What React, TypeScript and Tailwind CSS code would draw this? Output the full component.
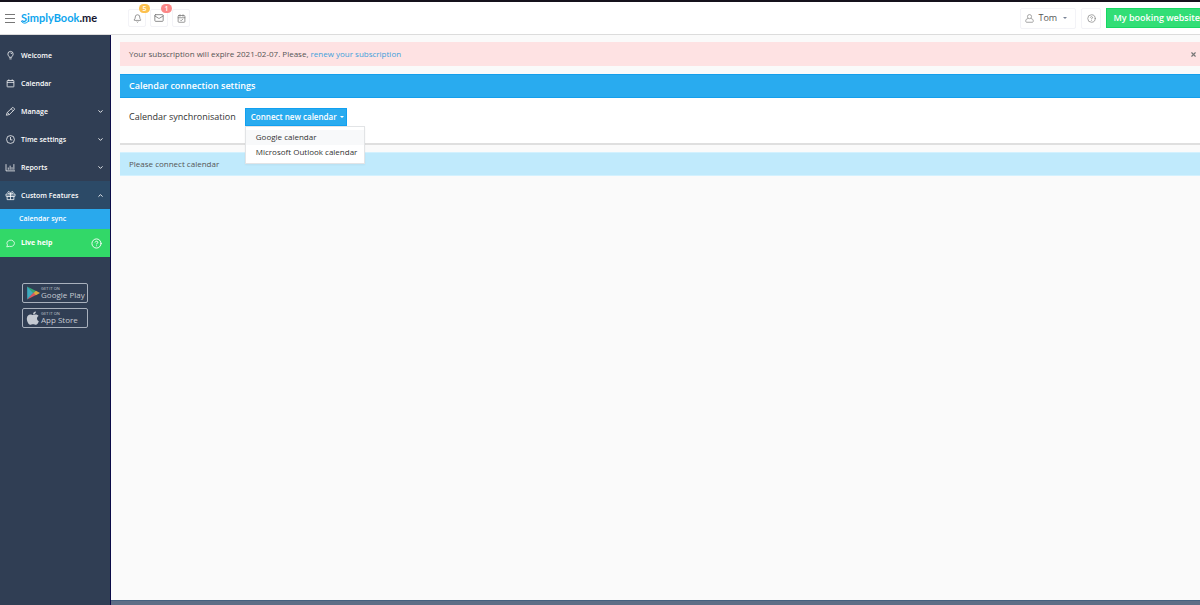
import type { ReactNode } from 'react';
import { Bell, CalendarCheck, ChevronDown, ChevronUp, CircleQuestionMark, Mail, X } from 'lucide-react';

type IconName = 'bulb' | 'calendar' | 'pencil' | 'clock' | 'chart' | 'gift' | 'chat';

const iconShapes: Record<IconName, ReactNode> = {
  bulb: (
    <>
      <path d="M9 17C9 14 5 13 5 8a7 7 0 0 1 14 0c0 5-4 6-4 9Z" />
      <path d="M9 21h6M12 5c2 0 3 1 3 3" />
    </>
  ),
  calendar: (
    <>
      <rect x="3" y="4" width="18" height="17" rx="1" />
      <path d="M3 9h18M7.500 1v4M16.500 1v4" />
    </>
  ),
  pencil: (
    <>
      <path d="M1 22l2-7L16.500 2a2.500 2.500 0 0 1 3.500 0l2 2a2.500 2.500 0 0 1 0 3.500L9 20Z" />
      <path d="M14 5l5 5M4 15l5 5" />
    </>
  ),
  clock: (
    <>
      <circle cx="12" cy="12" r="10.500" />
      <path d="M12 5v8h5" />
    </>
  ),
  chart: (
    <>
      <path d="M0 3v18h24" />
      <path d="M6 18v-6M11 18V7M16 18v-7M21 18V3" />
    </>
  ),
  gift: (
    <>
      <path d="M0 8h24v6H0ZM3 14h18v9H3ZM12 8v15" />
      <path d="M12 8C8 8 4 6 5 3s6-2 7 5c1-7 6-8 7-5s-3 5-7 5Z" />
    </>
  ),
  chat: <path d="M2 21l2-5A10 8.500 0 1 1 9 19.500Z" />,
};

const navItems: { label: string; icon: IconName; expandable?: boolean; open?: boolean }[] = [
  { label: 'Welcome', icon: 'bulb' },
  { label: 'Calendar', icon: 'calendar' },
  { label: 'Manage', icon: 'pencil', expandable: true },
  { label: 'Time settings', icon: 'clock', expandable: true },
  { label: 'Reports', icon: 'chart', expandable: true },
  { label: 'Custom Features', icon: 'gift', expandable: true, open: true },
];

function NavIcon({ name }: { name: IconName }) {
  return (
    <svg
      viewBox="0 0 24 24"
      fill="none"
      stroke="currentColor"
      strokeWidth="2"
      strokeLinejoin="round"
      className="mr-1.5 h-[9px] w-[9px] shrink-0 overflow-visible"
      aria-hidden="true"
    >
      {iconShapes[name]}
    </svg>
  );
}

function Caret({ className }: { className: string }) {
  return (
    <svg viewBox="0 0 4 2" className={`h-[2px] w-1 shrink-0 ${className}`} aria-hidden="true">
      <path d="M0 0h4L2 2Z" fill="currentColor" />
    </svg>
  );
}

function Logo() {
  return (
    <a href="#home" className="relative ml-1.5 flex items-center font-['Lato',sans-serif] text-[11px] leading-4 font-bold text-[#0ea5ee]">
      <svg viewBox="0 0 8 12" fill="none" className="absolute top-0.5 left-0 h-3 w-2" aria-hidden="true">
        <path d="M0 9c2 3 6 3 8-1" stroke="currentColor" strokeWidth="1" />
      </svg>
      SimplyBook<span className="text-[#15152f]">.me</span>
    </a>
  );
}

function HeaderIcon({ label, count, badge, children }: { label: string; count?: number; badge?: string; children: ReactNode }) {
  return (
    <button
      type="button"
      aria-label={label}
      className="relative flex h-[18px] w-[18px] items-center justify-center rounded-xs border border-[#f3f3f7] text-[#777]"
    >
      {children}
      {count && (
        <span
          className={`absolute -top-[6px] left-[10px] flex h-[9px] w-[11px] items-center justify-center rounded-full text-[7px] leading-none font-semibold text-white ${badge}`}
        >
          {count}
        </span>
      )}
    </button>
  );
}

function Header() {
  return (
    <header className="flex h-[35px] items-center overflow-hidden border-t-2 border-b border-t-[#15121c] border-b-[#dcdcdc] bg-white pl-[5px]">
      <button type="button" aria-label="Toggle menu" className="flex w-2.5 flex-col gap-[3px]">
        <span className="h-px bg-[#777]" />
        <span className="h-px bg-[#777]" />
        <span className="h-px bg-[#777]" />
      </button>
      <div className="w-[113px]">
        <Logo />
      </div>
      <div className="flex gap-1">
        <HeaderIcon label="Notifications" count={5} badge="bg-[#fcc04e]">
          <Bell size={9} strokeWidth={2} />
        </HeaderIcon>
        <HeaderIcon label="Messages" count={1} badge="bg-[#fb8787]">
          <Mail size={10} strokeWidth={2} />
        </HeaderIcon>
        <HeaderIcon label="Bookings">
          <CalendarCheck size={9} strokeWidth={2} />
        </HeaderIcon>
      </div>
      <div className="ml-auto flex items-center gap-[5px]">
        <button
          type="button"
          className="flex h-[21px] w-14 items-center rounded-xs border border-[#f3f3f7] pl-1 text-[9px] text-[#555]"
        >
          <svg viewBox="0 0 24 24" fill="none" stroke="#888" strokeWidth="2" className="mr-1 h-[9px] w-[9px]" aria-hidden="true">
            <circle cx="12" cy="7" r="5.500" />
            <path d="M8 12c-4 1-6 3-6 6 0 2 .5 4 2 4h16c1.500 0 2-2 2-4 0-3-2-5-6-6" />
          </svg>
          Tom
          <Caret className="ml-1.5 text-[#7a8497]" />
        </button>
        <button
          type="button"
          aria-label="Help"
          className="flex h-[21px] w-5 items-center justify-center rounded-xs border border-[#f3f3f7] text-[#888]"
        >
          <CircleQuestionMark size={9} strokeWidth={2} />
        </button>
        <a
          href="#website"
          className="flex h-5 items-center border border-r-0 border-[#16d763] bg-[#32de76] pl-1.5 text-[9px] font-semibold whitespace-nowrap text-white"
        >
          My booking website
        </a>
      </div>
    </header>
  );
}

function StoreBadge({ store, children }: { store: string; children: ReactNode }) {
  return (
    <a href="#store" className="flex h-5 w-[66px] items-center gap-px rounded-xs border border-[#a9b1bd] pl-[3px] text-[#c5cad2]">
      <svg viewBox="0 0 24 24" className="h-3.5 w-3.5 shrink-0" aria-hidden="true">
        {children}
      </svg>
      <span className="flex flex-col whitespace-nowrap">
        <span className="text-[4px] leading-[4px]">GET IT ON</span>
        <span className="text-[8px] leading-[8px]">{store}</span>
      </span>
    </a>
  );
}

function Sidebar() {
  return (
    <aside className="w-[111px] shrink-0 border-r border-[#0b0b47] bg-[#303e54] text-white">
      <nav className="pt-1.5 text-[7px] leading-3 font-semibold">
        {navItems.map((item) => (
          <a key={item.label} href="#menu" className={`flex h-7 items-center px-1.5 ${item.open ? 'bg-[#2c4a67]' : ''}`}>
            <NavIcon name={item.icon} />
            <span className="pt-px">{item.label}</span>
            {item.expandable && (item.open ? <ChevronUp size={7} strokeWidth={3} className="ml-auto" /> : <ChevronDown size={7} strokeWidth={3} className="ml-auto" />)}
          </a>
        ))}
        <a href="#sync" className="flex h-5 items-center bg-[#29a9ed] pl-[19px]">
          Calendar sync
        </a>
        <a href="#help" className="flex h-7 items-center bg-[#32d868] pr-2 pl-1.5 font-bold">
          <NavIcon name="chat" />
          Live help
          <CircleQuestionMark size={11} strokeWidth={2} className="ml-auto" />
        </a>
      </nav>
      <div className="mt-[26px] flex flex-col gap-[5px] pl-[22px]">
        <StoreBadge store="Google Play">
          <path d="M2 1v22l11-11Z" fill="#3dabc0" />
          <path d="M2 1l16 8-5 4Z" fill="#35a875" />
          <path d="M2 23l16-8-5-4Z" fill="#d95761" />
          <path d="M17 8l7 4-7 4-4-4Z" fill="#dda83c" />
        </StoreBadge>
        <StoreBadge store="App Store">
          <path
            d="M17 1c0 3-2 5-5 5 0-3 2-5 5-5ZM12 7c1.500 0 3-1.500 5-1 2 0 3.500 1 4.500 2.500-4 2.500-3 7.500.5 9-1 3-3 6-5 6s-2.500-1-5-1-3 1-5 1C4 23 1 17 1.500 12.500 2 8 4.500 6 7.500 6c2 0 3 1 4.500 1Z"
            fill="currentColor"
          />
        </StoreBadge>
      </div>
    </aside>
  );
}

export default function App() {
  return (
    <div className="flex min-h-screen flex-col bg-[#fafafa] font-['Open_Sans',sans-serif] text-[8px] text-[#555]">
      <Header />
      <div className="flex grow">
        <Sidebar />
        <div className="flex min-w-0 grow flex-col">
          <main className="grow pt-[7px] pl-[9px]">
            <div role="alert" className="flex h-6 items-center bg-[#fee2e3] pr-[3px] pl-[9px]">
              <p>
                Your subscription will expire 2021-02-07. Please,{' '}
                <a href="#renew" className="text-[#3d9fdb]">
                  renew your subscription
                </a>
              </p>
              <button type="button" aria-label="Close" className="ml-auto text-[#777]">
                <X size={7} strokeWidth={4} />
              </button>
            </div>

            <section className="mt-2 border-b-2 border-[#dfdfdf] bg-white">
              <h1 className="flex h-6 items-center border-y border-[#159fec] bg-[#29abef] px-[9px] text-[9px] font-semibold text-white">
                Calendar connection settings
              </h1>
              <div className="flex h-[45px] items-start gap-[9px] px-[9px] pt-2.5">
                <span className="text-[9px] leading-[18px] text-[#333]">Calendar synchronisation</span>
                <div className="relative">
                  <button
                    type="button"
                    aria-expanded="true"
                    className="flex h-[18px] w-[102px] items-center border border-[#12a0f0] bg-[#29abef] pl-[5px] text-[8px] font-semibold whitespace-nowrap text-white"
                  >
                    Connect new calendar
                    <Caret className="ml-[3px]" />
                  </button>
                  <div
                    role="menu"
                    className="absolute top-[18px] left-0 w-[120px] border border-[#e2e4e6] bg-white py-[3px] text-[#333] shadow-xs"
                  >
                    <a href="#google" role="menuitem" className="block h-[15px] bg-[#f8f9fa] pl-2.5 leading-[14px]">
                      Google calendar
                    </a>
                    <a href="#outlook" role="menuitem" className="block h-[15px] pl-2.5 leading-[14px]">
                      Microsoft Outlook calendar
                    </a>
                  </div>
                </div>
              </div>
            </section>

            <p className="mt-[7px] h-6 border-y border-[#d3f1fe] bg-[#c0eafc] pl-[9px] leading-[22px]">Please connect calendar</p>
          </main>
          <footer className="h-[5px] border-t border-[#45617f] bg-[#5d6e86]" />
        </div>
      </div>
    </div>
  );
}
